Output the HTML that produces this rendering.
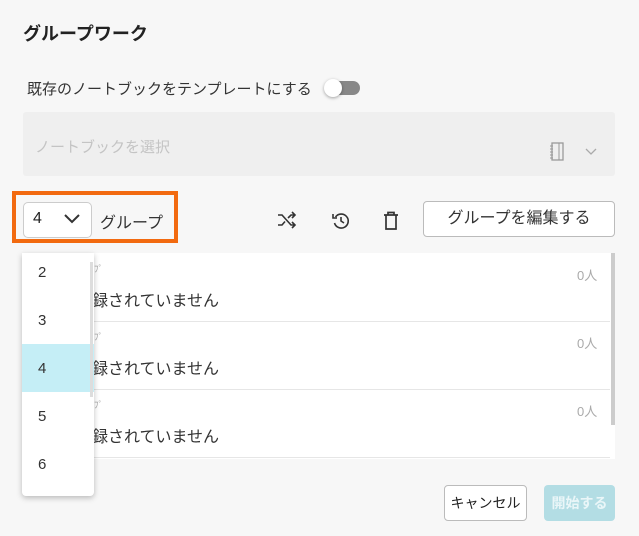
<!DOCTYPE html>
<html><head><meta charset="utf-8"><style>
*{box-sizing:border-box;margin:0;padding:0}
body{width:639px;height:536px;background:#f7f7f7;font-family:"Liberation Sans","Noto Sans CJK JP",sans-serif;color:#333;position:relative;overflow:hidden}
.abs{position:absolute}
</style></head><body>
<div class="abs" style="left:23px;top:20px;font-size:18px;font-weight:bold;color:#222">グループワーク</div>
<div class="abs" style="left:27px;top:78px;font-size:15px;color:#333">既存のノートブックをテンプレートにする</div>
<div class="abs" style="left:330px;top:81px;width:30px;height:14px;border-radius:7px;background:#888"></div>
<div class="abs" style="left:324px;top:79px;width:18px;height:18px;border-radius:50%;background:#fff;box-shadow:0 1px 3px rgba(0,0,0,.35)"></div>
<div class="abs" style="left:23px;top:112px;width:592px;height:64px;background:#efefef;border-radius:3px"></div>
<div class="abs" style="left:35px;top:136px;font-size:15px;color:#c4c4c4">ノートブックを選択</div>
<svg class="abs" style="left:548px;top:141px" width="18" height="22" viewBox="0 0 18 22"><rect x="4" y="2" width="11" height="17" fill="none" stroke="#999" stroke-width="1.3"/><line x1="11" y1="2" x2="11" y2="19" stroke="#999"/><path d="M2 5h3M2 8h3M2 11h3M2 14h3M2 17h3" stroke="#999"/></svg>
<svg class="abs" style="left:584px;top:147px" width="14" height="10"><path d="M2 2l5 5 5-5" fill="none" stroke="#aaa" stroke-width="1.3"/></svg>

<div class="abs" style="left:12px;top:191px;width:166px;height:52px;border:4px solid #f26a10"></div>
<div class="abs" style="left:23px;top:202px;width:69px;height:36px;border:1px solid #ccc;border-radius:5px;background:#fff"></div>
<div class="abs" style="left:33px;top:210px;font-size:16px;color:#222">4</div>
<svg class="abs" style="left:63px;top:213px" width="18" height="12"><path d="M2 2l7 7 7-7" fill="none" stroke="#333" stroke-width="2"/></svg>
<div class="abs" style="left:100px;top:209px;font-size:16px;color:#333">グループ</div>

<svg class="abs" style="left:276px;top:210px" width="22" height="20" viewBox="0 0 22 20"><path d="M2 5h4l9 10h4M2 15h4l3-3.5M12 8l3-3h4M16 2l3 3-3 3M16 12l3 3-3 3" fill="none" stroke="#333" stroke-width="1.6"/></svg>
<svg class="abs" style="left:331px;top:211px" width="20" height="20" viewBox="0 0 20 20"><path d="M4.5 6A7 7 0 1 1 3.5 12" fill="none" stroke="#333" stroke-width="1.6"/><path d="M2 3v4h4" fill="none" stroke="#333" stroke-width="1.6"/><path d="M10 6v4l3 2" fill="none" stroke="#333" stroke-width="1.6"/></svg>
<svg class="abs" style="left:383px;top:211px" width="16" height="20" viewBox="0 0 16 20"><path d="M1 4h14M5 4V1.5h6V4M3 4v14h10V4" fill="none" stroke="#333" stroke-width="1.7"/></svg>
<div class="abs" style="left:423px;top:201px;width:192px;height:36px;border:1px solid #bbb;border-radius:4px;background:#fff;font-size:16px;text-align:center;line-height:34px;color:#333">グループを編集する</div>

<div class="abs" style="left:23px;top:253px;width:592px;height:206px;background:#fff"></div>
<div class="abs" style="left:23px;top:321px;width:587px;height:1px;background:#e6e6e6"></div>
<div class="abs" style="left:23px;top:389px;width:587px;height:1px;background:#e6e6e6"></div>
<div class="abs" style="left:23px;top:457px;width:587px;height:1px;background:#e6e6e6"></div>
<div class="abs" style="left:611px;top:253px;width:4px;height:172px;background:#ccc"></div>
<div class="abs" style="left:577px;top:265px;font-size:13px;color:#aaa">0人</div>
<div class="abs" style="left:577px;top:333px;font-size:13px;color:#aaa">0人</div>
<div class="abs" style="left:577px;top:401px;font-size:13px;color:#aaa">0人</div>
<div class="abs" style="left:94px;top:262px;font-size:9px;color:#aaa">ﾌﾟ</div>
<div class="abs" style="left:94px;top:330px;font-size:9px;color:#aaa">ﾌﾟ</div>
<div class="abs" style="left:94px;top:398px;font-size:9px;color:#aaa">ﾌﾟ</div>
<div class="abs" style="left:76px;top:287px;font-size:16px;color:#333">登録されていません</div>
<div class="abs" style="left:76px;top:355px;font-size:16px;color:#333">登録されていません</div>
<div class="abs" style="left:76px;top:423px;font-size:16px;color:#333">登録されていません</div>

<div class="abs" style="left:22px;top:253px;width:72px;height:243px;background:#fff;border-radius:0 0 4px 4px;box-shadow:0 2px 6px rgba(0,0,0,.25);overflow:hidden">
<div class="abs" style="left:0;top:91px;width:72px;height:48px;background:#c5eef6"></div>
<div class="abs" style="left:16px;top:11px;font-size:15px">2</div>
<div class="abs" style="left:16px;top:59px;font-size:15px">3</div>
<div class="abs" style="left:16px;top:107px;font-size:15px">4</div>
<div class="abs" style="left:16px;top:155px;font-size:15px">5</div>
<div class="abs" style="left:16px;top:203px;font-size:15px">6</div>
<div class="abs" style="left:68px;top:9px;width:3px;height:135px;background:#ddd"></div>
</div>

<div class="abs" style="left:444px;top:485px;width:83px;height:36px;border:1px solid #bbb;border-radius:4px;background:#fff;font-size:14px;text-align:center;line-height:34px;color:#222">キャンセル</div>
<div class="abs" style="left:544px;top:485px;width:71px;height:36px;border-radius:4px;background:#b3dde4;font-size:14px;font-weight:bold;text-align:center;line-height:36px;color:#eaf6f8">開始する</div>
</body></html>
